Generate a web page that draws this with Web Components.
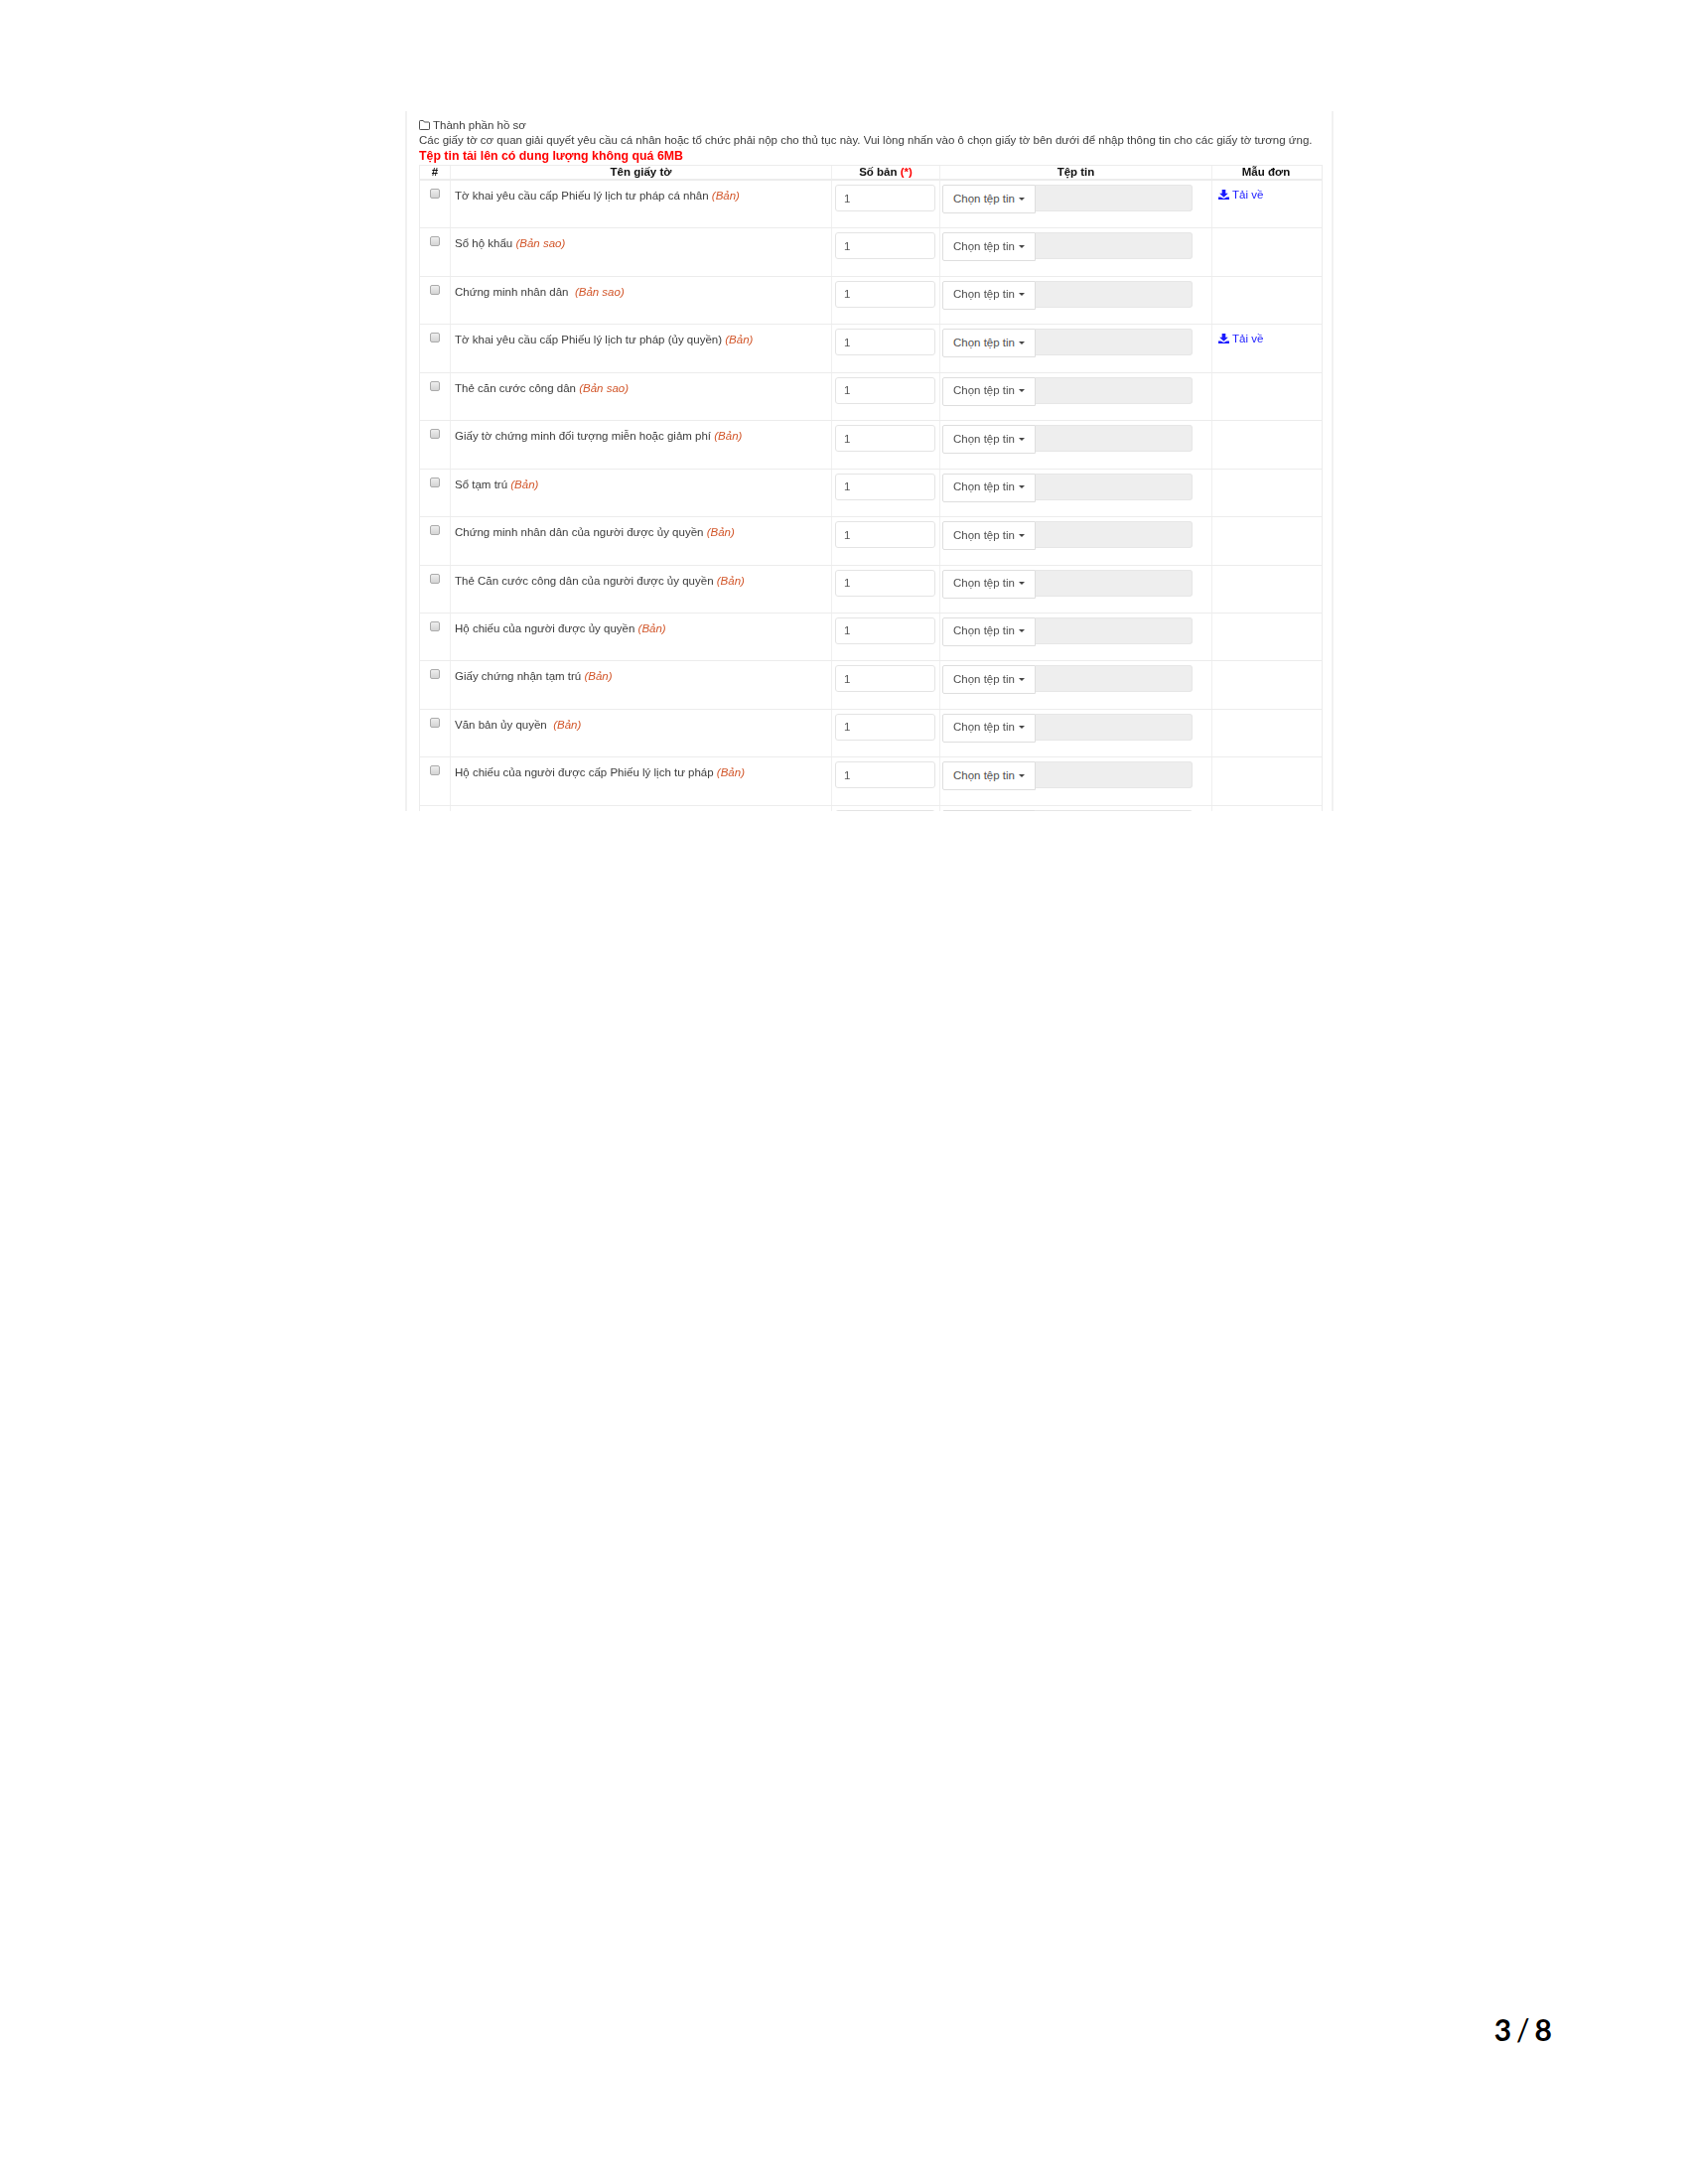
<!DOCTYPE html>
<html lang="vi">
<head>
<meta charset="utf-8">
<title>Thành phần hồ sơ</title>
<style>
  html, body { margin: 0; background: #fff; }
</style>
</head>
<body>
<print-page number="3" total="8">
  <doc-panel>
    <doc-table>
      <doc-row kind="(Bản)" sample>Tờ khai yêu cầu cấp Phiếu lý lịch tư pháp cá nhân</doc-row>
      <doc-row kind="(Bản sao)">Sổ hộ khẩu</doc-row>
      <doc-row kind="(Bản sao)">Chứng minh nhân dân&nbsp;</doc-row>
      <doc-row kind="(Bản)" sample>Tờ khai yêu cầu cấp Phiếu lý lịch tư pháp (ủy quyền)</doc-row>
      <doc-row kind="(Bản sao)">Thẻ căn cước công dân</doc-row>
      <doc-row kind="(Bản)">Giấy tờ chứng minh đối tượng miễn hoặc giảm phí</doc-row>
      <doc-row kind="(Bản)">Sổ tạm trú</doc-row>
      <doc-row kind="(Bản)">Chứng minh nhân dân của người được ủy quyền</doc-row>
      <doc-row kind="(Bản)">Thẻ Căn cước công dân của người được ủy quyền</doc-row>
      <doc-row kind="(Bản)">Hộ chiếu của người được ủy quyền</doc-row>
      <doc-row kind="(Bản)">Giấy chứng nhận tạm trú</doc-row>
      <doc-row kind="(Bản)">Văn bản ủy quyền&nbsp;</doc-row>
      <doc-row kind="(Bản)">Hộ chiếu của người được cấp Phiếu lý lịch tư pháp</doc-row>
      <doc-row blank></doc-row>
    </doc-table>
  </doc-panel>
</print-page>

<script>
// page frame with the number at the bottom
class PrintPage extends HTMLElement {
    constructor() {
        super();
        this.attachShadow({ mode: "open" });
    }

    connectedCallback() {
        const number = this.getAttribute("number");
        const total = this.getAttribute("total");
        this.shadowRoot.innerHTML = `
            <style>
                :host {
                    display: flex;
                    flex-direction: column;
                    box-sizing: border-box;
                    height: 2200px;
                    padding: 112px 137px 139px 408px;
                }
                .number {
                    margin-top: auto;
                    display: flex;
                    justify-content: flex-end;
                    gap: 5px;
                    font: bold 30px/34px Lato, sans-serif;
                    color: #000;
                }
                .slash { font-weight: 400; }
            </style>
            <slot></slot>
            <div class="number"><span>${number}</span><span class="slash">/</span><span>${total}</span></div>
        `;
    }
}

// bordered box, cut off at the bottom like the source print
class DocPanel extends HTMLElement {
    constructor() {
        super();
        this.attachShadow({ mode: "open" });
    }

    connectedCallback() {
        this.shadowRoot.innerHTML = `
            <style>
                :host {
                    display: block;
                    box-sizing: border-box;
                    width: 935px;
                    height: 705px;
                    overflow: hidden;
                    padding: 7px 12px 0;
                    border-left: 2px solid #f1f1f1;
                    border-right: 2px solid #f1f1f1;
                    font: 11.5px/15px "Liberation Sans", Arial, sans-serif;
                    color: #3c3c3c;
                    filter: blur(0.35px);
                }
                .title { display: flex; align-items: center; gap: 3px; height: 15px; }
                .title svg { width: 11px; height: 10px; flex: none; margin-top: -2px; }
                .intro { height: 15px; white-space: nowrap; }
                .warn {
                    height: 17px;
                    font: bold 12.35px/17px "Liberation Sans", Arial, sans-serif;
                    color: #ff0000;
                    white-space: nowrap;
                }
            </style>
            <div class="title">
                <svg viewBox="0 0 22 20"><path d="M2.5 1h6l2.2 3h8.8A1.5 1.5 0 0 1 21 5.5v12a1.5 1.5 0 0 1-1.5 1.5h-17A1.5 1.5 0 0 1 1 17.5v-15A1.5 1.5 0 0 1 2.5 1z" fill="none" stroke="#333" stroke-width="1.7"/></svg>
                <span>Thành phần hồ sơ</span>
            </div>
            <div class="intro">Các giấy tờ cơ quan giải quyết yêu cầu cá nhân hoặc tổ chức phải nộp cho thủ tục này. Vui lòng nhấn vào ô chọn giấy tờ bên dưới để nhập thông tin cho các giấy tờ tương ứng.</div>
            <div class="warn">Tệp tin tải lên có dung lượng không quá 6MB</div>
            <slot></slot>
        `;
    }
}

const COLUMNS = "30px 384px 109px 274px 109px";

class DocTable extends HTMLElement {
    constructor() {
        super();
        this.attachShadow({ mode: "open" });
    }

    connectedCallback() {
        this.shadowRoot.innerHTML = `
            <style>
                :host {
                    display: block;
                    width: 908px;
                    border-left: 1px solid #ececec;
                    border-right: 1px solid #ececec;
                }
                .head {
                    display: grid;
                    grid-template-columns: ${COLUMNS};
                    box-sizing: border-box;
                    height: 16px;
                    border-top: 1px solid #ececec;
                    border-bottom: 2px solid #ececec;
                    font-weight: bold;
                    color: #111;
                    line-height: 13px;
                    text-align: center;
                }
                .head div + div { border-left: 1px solid #f0f0f0; }
                .req { color: #f00; }
            </style>
            <div class="head">
                <div>#</div>
                <div>Tên giấy tờ</div>
                <div>Số bản <span class="req">(*)</span></div>
                <div>Tệp tin</div>
                <div>Mẫu đơn</div>
            </div>
            <slot></slot>
        `;
    }
}

// one document line: checkbox, name, copies, file picker, sample link
class DocRow extends HTMLElement {
    constructor() {
        super();
        this.attachShadow({ mode: "open" });
    }

    connectedCallback() {
        const kind = this.getAttribute("kind") || "";
        const blank = this.hasAttribute("blank"); // last line, only its top edge shows
        const sample = this.hasAttribute("sample")
            ? `<a class="sample" href="#"><svg viewBox="0 0 12 11"><path d="M4 0h4v4h2.8L6 8.4 1.2 4H4zM0 8.2h2.6L6 10l3.4-1.8H12V11H0z" fill="#1a1aff"/></svg>Tải về</a>`
            : "";
        this.shadowRoot.innerHTML = `
            <style>
                :host {
                    display: grid;
                    grid-template-columns: ${COLUMNS};
                    box-sizing: border-box;
                    height: 48.45px;
                    border-bottom: 1px solid #ececec;
                }
                .cell { box-sizing: border-box; min-width: 0; }
                .cell + .cell { border-left: 1px solid #f0f0f0; }
                .check { display: flex; justify-content: center; padding-top: 8px; }
                input[type=checkbox] {
                    appearance: none;
                    box-sizing: border-box;
                    width: 10px;
                    height: 10px;
                    margin: 0;
                    border: 1px solid #ababab;
                    border-radius: 2px;
                    background: linear-gradient(#eee, #d4d4d4);
                }
                .name { padding: 8px 3px 0 4px; white-space: nowrap; }
                .kind { font-style: italic; color: #d2562a; }
                .copies { padding: 4px 4px 0 3px; }
                .copies input {
                    display: block;
                    box-sizing: border-box;
                    width: 100%;
                    height: 27px;
                    padding: 0 8px;
                    border: 1px solid #e4e4e4;
                    border-radius: 3px;
                    font: inherit;
                    color: #555;
                    background: #fff;
                }
                .file { display: flex; align-items: flex-start; padding: 4px 0 0 2px; }
                .pick {
                    display: flex;
                    align-items: center;
                    justify-content: center;
                    gap: 4px;
                    box-sizing: border-box;
                    width: 94px;
                    height: 29px;
                    padding: 0 0 1px;
                    border: 1px solid #dedede;
                    border-radius: 2px 0 0 2px;
                    background: #fff;
                    font: inherit;
                    color: #505050;
                }
                .caret {
                    width: 0;
                    height: 0;
                    border-left: 3.5px solid transparent;
                    border-right: 3.5px solid transparent;
                    border-top: 3.5px solid #444;
                }
                .path {
                    box-sizing: border-box;
                    width: 158px;
                    height: 27px;
                    border: 1px solid #e6e6e6;
                    border-left: 0;
                    border-radius: 0 3px 3px 0;
                    background: #eee;
                }
                .form { padding: 7px 0 0 6px; }
                .sample {
                    display: inline-flex;
                    align-items: center;
                    gap: 3px;
                    color: #1a1aff;
                    text-decoration: none;
                }
                .sample svg { width: 11px; height: 10px; flex: none; margin-top: -2px; }
            </style>
            <div class="cell check"><input type="checkbox"></div>
            <div class="cell name"><slot></slot> <span class="kind">${kind}</span></div>
            <div class="cell copies"><input type="text" value="${blank ? "" : "1"}"></div>
            <div class="cell file">
                <button class="pick" type="button">${blank ? "" : 'Chọn tệp tin <span class="caret"></span>'}</button>
                <div class="path"></div>
            </div>
            <div class="cell form">${sample}</div>
        `;
    }
}

customElements.define("print-page", PrintPage);
customElements.define("doc-panel", DocPanel);
customElements.define("doc-table", DocTable);
customElements.define("doc-row", DocRow);
</script>
</body>
</html>
